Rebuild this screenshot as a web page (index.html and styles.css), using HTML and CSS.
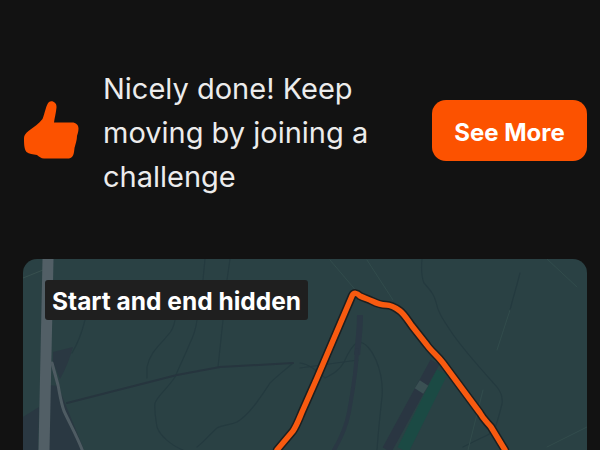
FILE: index.html
```html
<!DOCTYPE html>
<html lang="en">
<head>
    <meta charset="UTF-8">
    <meta name="viewport" content="width=device-width, initial-scale=1.0">
    <title>Activity</title>
    <link rel="stylesheet" href="styles.css">
</head>
<body>
    <section class="prompt">
        <svg class="thumb" viewBox="20 98 62 64" aria-hidden="true">
            <path d="M49 102C52 100 57 102.500 56.500 107.500C56 113 54.500 118 54 122.500L72 122.500C76 122.500 78.500 125 78.500 128.500C78.500 131.500 77.500 134 77 136C77 140 75.500 144 74.500 148C74 153 73.500 158 69 158.500L44 158.500C41 158.500 39 156.500 37 155C33 154.500 29 154 26.500 152C24 149 24 143 24 138C24 135 26 133 28.500 131C34 126.500 39 124 42.500 119C45 113 46 105 49 102Z"/>
        </svg>
        <p class="prompt-text">Nicely done! Keep moving by joining a challenge</p>
        <button class="see-more">See More</button>
    </section>

    <section class="map">
        <svg class="map-art" viewBox="23 259 564 191" aria-hidden="true">
            <!-- water / dark areas -->
            <path class="area" d="M53 352L73 347C70 358 66 368 60 379L53 362Z"/>
            <path class="area" d="M23 417L39 407L38 450L23 450Z"/>
            <path class="area" d="M49 385L58 386L84 450L49 450Z"/>
            <path class="light" d="M23 278L43 270"/>

            <!-- thin paths -->
            <path class="line" d="M85 320C82 332 78 343 72 353"/>
            <path class="line" d="M175 320C174 326 172 331 168 335C160 345 150 352 147 367L147 378"/>
            <path class="line" d="M197 320C196 328 193 337 190 343C186 353 180 365 175 377C168 388 158 395 155 403C154 412 156 420 157 427C160 436 172 446 183 450"/>
            <path class="line" d="M223 320L218 367"/>
            <path class="line" d="M205 259L203 280M230 259L227 280"/>
            <path class="line" d="M293 363C285 370 277 376 270 383C260 398 250 414 237 422C230 425 223 425 217 428C210 434 204 442 197 447"/>
            <path class="line" d="M422 259C421 270 421 276 424 283C430 290 434 294 436 302C438 312 442 318 450 330C460 346 480 368 497 387C501 392 503 397 502 404C500 412 498 420 495 428C492 434 485 436 473 442L463 447"/>
            <path class="line" d="M300 363C310 364 318 372 325 378C333 374 340 370 344 362C348 353 352 345 358 342C365 342 372 350 376 360C381 372 383 385 382 397C380 415 378 435 377 450"/>
            <path class="line" d="M300 368L358 360"/>
            <path class="line-strong" d="M67 403L177 375L220 367L293 363"/>
            <path class="line" d="M520 273C517 285 513 298 510 310"/>
            <path class="faint" d="M510 310L497 350M547 259L577 287M587 427L547 447M483 390L468 450M330 260L358 293M367 260L393 300"/>

            <!-- roads -->
            <path class="road-dark" d="M360 315C360 330 358 345 357 355"/>
            <path class="road-mid" d="M357 350C356 375 352 395 349 412C346 428 340 440 334 450"/>
            <path class="road-green" d="M442 372L403 450"/>
            <path class="road-wide" d="M435 362L387 450"/>
            <path class="road-gap" d="M424 383L419 391"/>
            <path class="road-grey" d="M48 259L44 450"/>
            <path class="road-grey-thin" d="M52 363L58 385C60 395 61 403 64 411C70 424 78 438 83 452"/>

            <!-- route -->
            <path class="route-edge" d="M277 450L293 431C297 425 299 419 302 412L317 378L352 296C354 292 357 293 360 296C364 298 368 299 372 301C376 303 381 305 386 305C391 305 396 308 400 311C404 314 407 319 412 326L427 345C431 351 437 355 443 363L480 413C484 420 487 422 491 427L505 450"/>
            <path class="route" d="M277 450L293 431C297 425 299 419 302 412L317 378L352 296C354 292 357 293 360 296C364 298 368 299 372 301C376 303 381 305 386 305C391 305 396 308 400 311C404 314 407 319 412 326L427 345C431 351 437 355 443 363L480 413C484 420 487 422 491 427L505 450"/>
        </svg>
        <span class="map-label">Start and end hidden</span>
    </section>
</body>
</html>
```

FILE: styles.css
```css
html, body {
    height: 100%;
}

body {
    margin: 0;
    padding-top: 67px;
    box-sizing: border-box;
    overflow: hidden;
    background-color: #121212;
    font-family: 'Inter', 'Liberation Sans', sans-serif;
}

.prompt {
    display: flex;
    align-items: center;
    padding: 0 13px 0 23px;
}

.thumb {
    width: 62px;
    height: 64px;
    margin-left: -3px;
    margin-right: 21px;
    margin-top: -6px;
    flex: none;
    fill: #fc5200;
}

.prompt-text {
    flex: 1;
    margin: 0;
    max-width: 290px;
    color: #ececec;
    font-size: 29px;
    line-height: 44px;
}

.see-more {
    flex: none;
    width: 155px;
    height: 61px;
    margin-left: auto;
    margin-top: -5px;
    padding: 4px 0 0;
    border: none;
    border-radius: 14px;
    background-color: #fc5200;
    color: #fff;
    font-family: inherit;
    font-size: 24px;
    font-weight: 700;
}

.map {
    position: relative;
    height: 191px;
    margin: 60px 13px 0 23px;
    border-radius: 14px 14px 0 0;
    overflow: hidden;
    background-color: #2a4144;
}

.map-art {
    display: block;
    width: 100%;
    height: 100%;
    fill: none;
    stroke-linecap: round;
    stroke-linejoin: round;
}

.map-label {
    position: absolute;
    top: 21px;
    left: 22px;
    padding: 2px 7px 0;
    border-radius: 3px;
    background-color: #1f1f1f;
    color: #fff;
    font-size: 24.500px;
    font-weight: 700;
    line-height: 38px;
}

.area {
    fill: #2a3842;
}

.light {
    stroke: #38504f;
    stroke-width: 1;
}

.line {
    stroke: #243a3f;
    stroke-width: 1.200;
}

.line-strong {
    stroke: #26353e;
    stroke-width: 2;
}

.faint {
    stroke: #324c4c;
    stroke-width: 1;
}

.road-dark {
    stroke: #2a3844;
    stroke-width: 6;
    stroke-linecap: butt;
}

.road-mid {
    stroke: #2a3844;
    stroke-width: 4;
}

.road-wide {
    stroke: #2a3642;
    stroke-width: 10;
    stroke-linecap: butt;
}

.road-green {
    stroke: #1b4a44;
    stroke-width: 12;
    stroke-linecap: butt;
}

.road-gap {
    stroke: #3a5053;
    stroke-width: 10;
    stroke-linecap: butt;
}

.road-grey {
    stroke: #525f66;
    stroke-width: 11;
    stroke-linecap: butt;
}

.road-grey-thin {
    stroke: #4e5b62;
    stroke-width: 3;
}

.route-edge {
    stroke: #1c1f20;
    stroke-width: 8.500;
}

.route {
    stroke: #f85a10;
    stroke-width: 5.500;
}
```
